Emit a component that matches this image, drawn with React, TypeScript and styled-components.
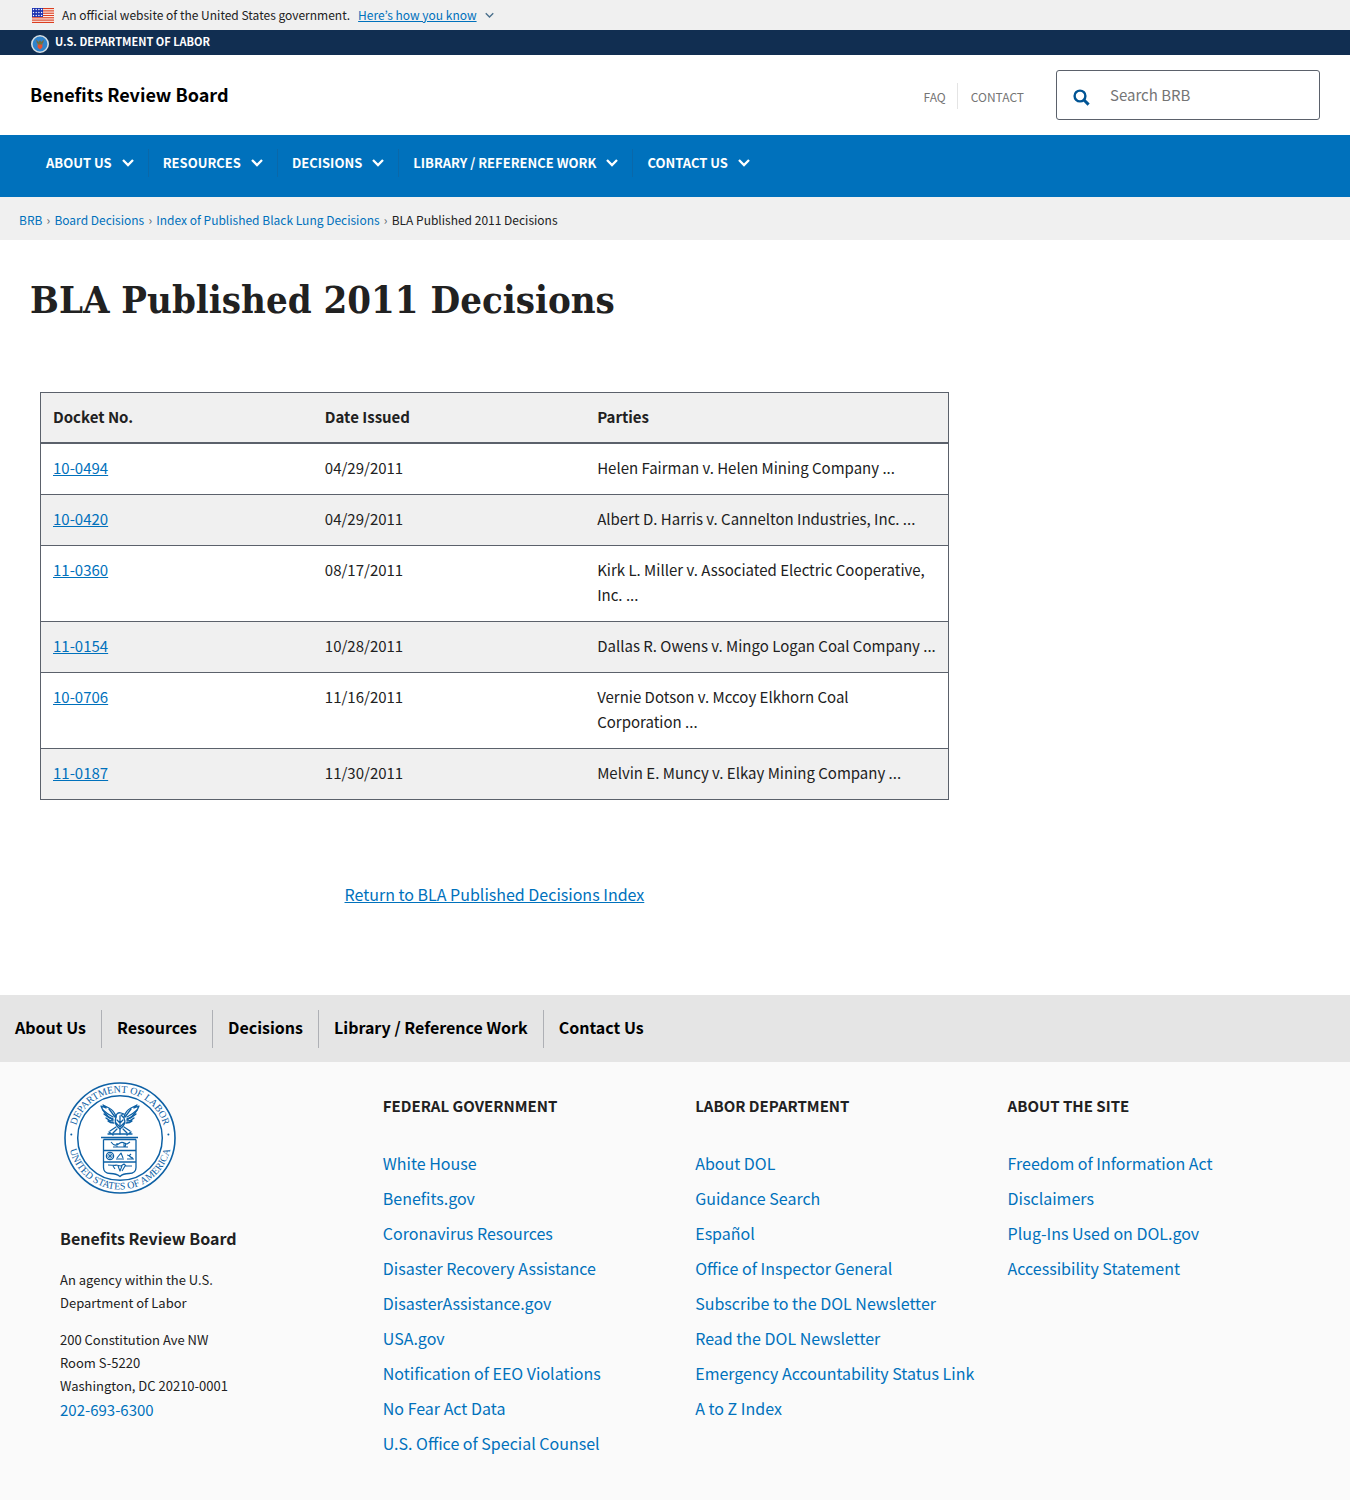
import React from "react";
import styled, { createGlobalStyle } from "styled-components";

const sans = `"Noto Sans CJK KR", "Open Sans", sans-serif`;

const color = {
  ink: "#212121",
  link: "#0071bc",
  navy: "#112e51",
  grey: "#f0f0f0",
  line: "#5b616b",
};

const GlobalStyle = createGlobalStyle`
  *, *::before, *::after { box-sizing: border-box; }
  body {
    margin: 0;
    background: #ffffff;
    color: ${color.ink};
    font-family: ${sans};
    font-size: 15px;
    line-height: 25px;
  }
  a { color: ${color.link}; }
  ul, ol { list-style: none; margin: 0; padding: 0; }
  svg { display: block; flex: none; }
`;

const Banner = styled.div`
  display: flex;
  align-items: center;
  height: 30px;
  padding: 0 32px;
  background: ${color.grey};
  font-size: 12px;
  line-height: 20px;
`;

const BannerText = styled.span`
  margin: 0 8px;
`;

const BannerButton = styled.button`
  display: flex;
  align-items: center;
  gap: 8px;
  padding: 0;
  border: 0;
  background: none;
  color: ${color.link};
  font: inherit;
  cursor: pointer;

  span { text-decoration: underline; }
`;

const DepartmentBar = styled.div`
  display: flex;
  height: 25px;
  padding: 0 31px;
  background: ${color.navy};
`;

const DepartmentLink = styled.a`
  display: flex;
  align-items: flex-start;
  gap: 6px;
  color: #ffffff;
  font-size: 11px;
  font-weight: 700;
  line-height: 22px;
  text-decoration: none;

  svg { margin-top: 5px; }
`;

const Header = styled.header`
  display: flex;
  align-items: center;
  height: 80px;
  padding: 0 30px;
`;

const SiteName = styled.a`
  margin-right: auto;
  padding-bottom: 2px;
  color: #000000;
  font-size: 18px;
  font-weight: 700;
  text-decoration: none;
`;

const UtilityLinks = styled.ul`
  display: flex;
  margin-right: 32px;
  padding-top: 2px;

  li + li {
    margin-left: 11px;
    padding-left: 13px;
    border-left: 1px solid #e4e4e4;
  }
`;

const UtilityLink = styled.a`
  color: #757575;
  font-size: 12px;
  text-decoration: none;
`;

const SearchForm = styled.form`
  display: flex;
  align-items: center;
  width: 264px;
  height: 50px;
  border: 1px solid ${color.line};
  border-radius: 3px;
`;

const SearchButton = styled.button`
  display: flex;
  padding: 4px 16px 0;
  border: 0;
  background: none;
  color: #005494;
  cursor: pointer;
`;

const SearchInput = styled.input`
  flex: 1;
  min-width: 0;
  height: 40px;
  padding: 0 4px 2px;
  border: 0;
  background: none;
  color: ${color.ink};
  font: inherit;
  outline-offset: -2px;

  &::placeholder { color: #757575; opacity: 1; }
`;

const MainNav = styled.nav`
  height: 62px;
  padding: 14px 32px;
  background: ${color.link};

  ul { display: flex; }
  li + li { border-left: 1px solid #0a68a9; }
`;

const NavButton = styled.button`
  display: flex;
  align-items: center;
  gap: 10px;
  height: 28px;
  padding: 0 14px;
  border: 0;
  background: none;
  color: #ffffff;
  font: 700 13px/28px ${sans};
  text-transform: uppercase;
  cursor: pointer;
`;

const Breadcrumbs = styled.nav`
  padding: 13px 19px 10px;
  background: ${color.grey};
  font-size: 12px;
  line-height: 20px;

  ol { display: flex; }
  li { display: flex; align-items: center; }
  li + li::before {
    content: "›";
    width: 12px;
    text-align: center;
    color: ${color.line};
  }
  a { text-decoration: none; }
`;

const Main = styled.main`
  padding: 32px 30px 88px;
`;

const Title = styled.h1`
  margin: 0 0 64px;
  font-family: "DejaVu Serif Condensed", "DejaVu Serif", serif;
  font-size: 38px;
  font-weight: 700;
  line-height: 56px;
`;

const Article = styled.article`
  width: 72%;
  padding: 0 10px;
  text-align: center;
`;

const Table = styled.table`
  width: 100%;
  margin-bottom: 82px;
  border: 1px solid ${color.line};
  border-collapse: collapse;
  table-layout: fixed;
  text-align: left;

  th, td {
    padding: 11px 12px 14px;
    border-bottom: 1px solid ${color.line};
    font-weight: 400;
    vertical-align: top;
  }
  thead th {
    padding-bottom: 13px;
    border-bottom-width: 2px;
    background: ${color.grey};
    font-weight: 700;
  }
  tbody tr:nth-child(even) { background: ${color.grey}; }
`;

const HeadCell = styled.th<{ $width: number }>`
  width: ${(p) => p.$width}%;
`;

const ReturnLink = styled.a`
  font-size: 16px;
`;

const FooterNav = styled.nav`
  padding: 15px 0 14px;
  background: #e5e5e5;

  ul { display: flex; }
  li + li { border-left: 1px solid #aeb0b5; }
`;

const FooterNavLink = styled.a`
  display: block;
  padding: 0 15px 4px;
  color: #000000;
  font-size: 16px;
  font-weight: 700;
  line-height: 34px;
  text-decoration: none;
`;

const Footer = styled.footer`
  display: grid;
  grid-template-columns: minmax(0, 31fr) repeat(3, minmax(0, 30fr));
  padding: 20px 30px 40px 60px;
  background: #fafafa;
`;

const Agency = styled.address`
  font-size: 13px;
  font-style: normal;
  line-height: 23px;

  > svg { margin: 0 4px 32px; }
  h2 { margin: 0 0 17px; font-size: 16px; line-height: 25px; }
  p { margin: 0 0 14px; }
  a { font-size: 15px; line-height: 25px; text-decoration: none; }
`;

const LinkColumn = styled.section`
  padding-top: 11px;

  h3 {
    margin: 0 0 28px;
    font-size: 15px;
    line-height: 25px;
    text-transform: uppercase;
  }
  li { font-size: 16px; line-height: 35px; }
  a { text-decoration: none; }
`;

const Flag = () => (
  <svg width="22" height="15" viewBox="0 0 22 15" aria-hidden="true">
    <rect width="22" height="15" fill="#ffffff" />
    {[0, 1, 2, 3, 4, 5, 6].map((i) => (
      <rect key={i} y={i * 2.3} width="22" height="1.2" fill="#db3e1f" />
    ))}
    <rect width="11" height="9" fill="#1e33b1" />
    {[1.5, 4.5, 7.5].map((y) =>
      [1.5, 4.2, 6.9, 9.6].map((x) => (
        <circle key={`${x}-${y}`} cx={x} cy={y} r="0.7" fill="#ffffff" />
      ))
    )}
  </svg>
);

const Chevron = ({ size, stroke, tint }: { size: number; stroke: number; tint: string }) => (
  <svg width={size} height={size} viewBox="0 0 12 12" fill="none" stroke={tint} strokeWidth={stroke} aria-hidden="true">
    <path d="M1 3 6 8 11 3" />
  </svg>
);

const SearchIcon = () => (
  <svg width="17" height="17" viewBox="0 0 17 17" fill="none" stroke="currentColor" aria-hidden="true">
    <circle cx="7" cy="7" r="5.4" strokeWidth="2.4" />
    <path d="m11 11 4.6 4.6" strokeWidth="3" />
  </svg>
);

const SmallSeal = () => (
  <svg width="18" height="18" viewBox="0 0 18 18" aria-hidden="true">
    <circle cx="9" cy="9" r="8.2" fill="#2f83cc" stroke="#d5dde2" strokeWidth="1.6" />
    <path d="M5 4.6 7.6 7 9 5.2 10.4 7 13 4.6 12 8.4H6Z" fill="#77683f" />
    <path d="M6.6 8.6h4.8v3.8L9 14.4l-2.4-2Z" fill="#e8502f" />
    <path d="M7 7.5h4v2H7Z" fill="#5d7d4b" />
  </svg>
);

const Seal = () => (
  <svg width="112" height="112" viewBox="0 0 112 112" fill="none" stroke="#0e61a5" role="img" aria-label="Department of Labor seal">
    <defs>
      <path id="sealTop" d="M10.500 56a45.5 45.5 0 0 1 91 0" />
      <path id="sealBottom" d="M4.500 50a51.5 51.5 0 1 0 103 0" />
    </defs>
    <circle cx="56" cy="56" r="55" fill="#ffffff" strokeWidth="1.6" />
    <circle cx="56" cy="56" r="42.3" strokeWidth="1.5" />
    <g fill="#0e61a5" stroke="none" fontFamily="Liberation Serif, serif" fontSize="10" textAnchor="middle">
      <text><textPath href="#sealTop" startOffset="50%">DEPARTMENT OF LABOR</textPath></text>
      <text transform="translate(0 6)"><textPath href="#sealBottom" startOffset="50%">UNITED STATES OF AMERICA</textPath></text>
      <circle cx="7.3" cy="52.5" r="1" />
      <circle cx="104.4" cy="52.5" r="1" />
    </g>
    <g strokeWidth="1.3" strokeLinejoin="round" strokeLinecap="round">
      <path d="M49 38c-5-3-10-8-12-14l5 2-3-3 6 3c4 2 6 5 7 9M63 38c5-3 10-8 12-14l-5 2 3-3-6 3c-4 2-6 5-7 9" />
      <path d="M39 28c3 3 6 5 10 7M40 32c3 3 5 4 9 5M42 36c2 2 4 3 7 3M44 39c2 2 4 2 6 2M73 28c-3 3-6 5-10 7M72 32c-3 3-5 4-9 5M70 36c-2 2-4 3-7 3M68 39c-2 2-4 2-6 2M45 27l6 8M67 27l-6 8" />
      <path d="M52 35c0-3 2-5 5-4l3 1-3 1 3 3c2 4 0 8-4 11-4-3-6-7-4-12Z" />
      <path d="M53 38l3 3 3-3M52 41l4 4 4-4M56 34v9M52 45l-6 4M60 45l6 4M53 47l-4 4M59 47l4 4M56 47v5" />
      <path d="M44 52h24M45 50l4 3M67 50l-4 3" />
    </g>
    <g strokeWidth="1.3" strokeLinejoin="round">
      <path d="M37 55.500h37M39.500 57.500h32.500M39.500 57.500v28c0 4 3 6 7 6 4 0 7 1 9.500 3 2-2 5-3 9-3 4 0 7-2 7-6v-28" />
      <path d="M40 68.500h32M40 80h32" />
      <path d="M47 60c3 4 5 4 9 1 3-2 5 1 7 1l3-2M49 65h15M53 61v4M60 61v4M62 61l-1 4" strokeWidth="1.1" />
      <circle cx="46" cy="74" r="3.6" />
      <path d="M42.4 74h7.2M46 70.4v7.2M43.500 71.500l5 5M48.500 71.500l-5 5" strokeWidth="0.8" />
      <path d="M52 77h8M53 76l4-5 2 5M63 77h7M63 73c3 0 3 3 6 3M65 74l2-2" strokeWidth="1.1" />
      <path d="M44 83c4 0 7 1 8 0l5 1 3-2 2 2h6M49 84l2 3M54 84l2 5 2-5M61 84l-3 5" strokeWidth="1.1" />
    </g>
  </svg>
);

const navItems = ["About Us", "Resources", "Decisions", "Library / Reference Work", "Contact Us"];
const crumbs = ["BRB", "Board Decisions", "Index of Published Black Lung Decisions"];

const decisions = [
  ["10-0494", "04/29/2011", "Helen Fairman v. Helen Mining Company ..."],
  ["10-0420", "04/29/2011", "Albert D. Harris v. Cannelton Industries, Inc. ..."],
  ["11-0360", "08/17/2011", "Kirk L. Miller v. Associated Electric Cooperative, Inc. ..."],
  ["11-0154", "10/28/2011", "Dallas R. Owens v. Mingo Logan Coal Company ..."],
  ["10-0706", "11/16/2011", "Vernie Dotson v. Mccoy Elkhorn Coal Corporation ..."],
  ["11-0187", "11/30/2011", "Melvin E. Muncy v. Elkay Mining Company ..."],
];

const columns = [
  {
    title: "Federal Government",
    links: ["White House", "Benefits.gov", "Coronavirus Resources", "Disaster Recovery Assistance", "DisasterAssistance.gov", "USA.gov", "Notification of EEO Violations", "No Fear Act Data", "U.S. Office of Special Counsel"],
  },
  {
    title: "Labor Department",
    links: ["About DOL", "Guidance Search", "Español", "Office of Inspector General", "Subscribe to the DOL Newsletter", "Read the DOL Newsletter", "Emergency Accountability Status Link", "A to Z Index"],
  },
  {
    title: "About the Site",
    links: ["Freedom of Information Act", "Disclaimers", "Plug-Ins Used on DOL.gov", "Accessibility Statement"],
  },
];

export default function App() {
  return (
    <>
      <GlobalStyle />
      <Banner>
        <Flag />
        <BannerText>An official website of the United States government.</BannerText>
        <BannerButton type="button">
          <span>Here’s how you know</span>
          <Chevron size={9} stroke={1.8} tint="#4a6f8c" />
        </BannerButton>
      </Banner>
      <DepartmentBar>
        <DepartmentLink href="#dol">
          <SmallSeal />
          U.S. DEPARTMENT OF LABOR
        </DepartmentLink>
      </DepartmentBar>
      <Header>
        <SiteName href="#home">Benefits Review Board</SiteName>
        <UtilityLinks>
          <li><UtilityLink href="#faq">FAQ</UtilityLink></li>
          <li><UtilityLink href="#contact">CONTACT</UtilityLink></li>
        </UtilityLinks>
        <SearchForm role="search">
          <SearchButton type="button" aria-label="Search"><SearchIcon /></SearchButton>
          <SearchInput type="search" aria-label="Search BRB" placeholder="Search BRB" />
        </SearchForm>
      </Header>
      <MainNav aria-label="Main">
        <ul>
          {navItems.map((item) => (
            <li key={item}>
              <NavButton type="button">
                {item}
                <Chevron size={12} stroke={2.3} tint="#ffffff" />
              </NavButton>
            </li>
          ))}
        </ul>
      </MainNav>
      <Breadcrumbs aria-label="Breadcrumb">
        <ol>
          {crumbs.map((crumb) => (
            <li key={crumb}><a href="#crumb">{crumb}</a></li>
          ))}
          <li aria-current="page">BLA Published 2011 Decisions</li>
        </ol>
      </Breadcrumbs>
      <Main>
        <Title>BLA Published 2011 Decisions</Title>
        <Article>
          <Table>
            <thead>
              <tr>
                <HeadCell scope="col" $width={30}>Docket No.</HeadCell>
                <HeadCell scope="col" $width={30}>Date Issued</HeadCell>
                <HeadCell scope="col" $width={40}>Parties</HeadCell>
              </tr>
            </thead>
            <tbody>
              {decisions.map(([docket, date, parties]) => (
                <tr key={docket}>
                  <td><a href={`#${docket}`}>{docket}</a></td>
                  <td>{date}</td>
                  <td>{parties}</td>
                </tr>
              ))}
            </tbody>
          </Table>
          <ReturnLink href="#index">Return to BLA Published Decisions Index</ReturnLink>
        </Article>
      </Main>
      <FooterNav aria-label="Footer">
        <ul>
          {navItems.map((item) => (
            <li key={item}><FooterNavLink href="#section">{item}</FooterNavLink></li>
          ))}
        </ul>
      </FooterNav>
      <Footer>
        <Agency>
          <Seal />
          <h2>Benefits Review Board</h2>
          <p>An agency within the U.S.<br />Department of Labor</p>
          <div>200 Constitution Ave NW<br />Room S-5220<br />Washington, DC 20210-0001</div>
          <a href="tel:202-693-6300">202-693-6300</a>
        </Agency>
        {columns.map((column) => (
          <LinkColumn key={column.title}>
            <h3>{column.title}</h3>
            <ul>
              {column.links.map((link) => (
                <li key={link}><a href="#link">{link}</a></li>
              ))}
            </ul>
          </LinkColumn>
        ))}
      </Footer>
    </>
  );
}
